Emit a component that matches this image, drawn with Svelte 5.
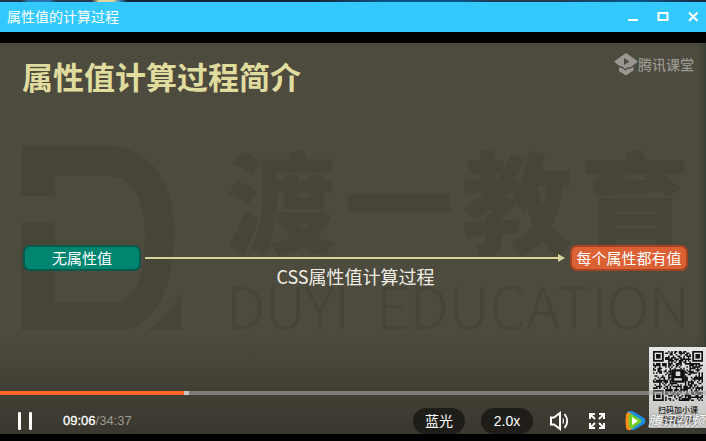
<script>
  const duration = 2077;
  let current = $state(546);
  let playing = $state(true);

  const clock = (s) =>
    `${String(Math.floor(s / 60)).padStart(2, '0')}:${String(s % 60).padStart(2, '0')}`;
  let percent = $derived((current / duration) * 100);

  // QR modules: three finder squares plus a fixed scatter of data cells
  const size = 33;
  const inFinder = (x, y) =>
    (x < 8 && y < 8) || (x > size - 9 && y < 8) || (x < 8 && y > size - 9);
  let seed = 20;
  let cells = '';
  for (let y = 0; y < size; y++) {
    for (let x = 0; x < size; x++) {
      seed = (seed * 1103515245 + 12345) % 2147483648;
      const centre = Math.abs(x - 16) < 5 && Math.abs(y - 16) < 5;
      if (!inFinder(x, y) && !centre && seed / 2147483648 > 0.45) cells += `M${x} ${y}h1v1h-1z`;
    }
  }
  const finders = [[0, 0], [size - 7, 0], [0, size - 7]];
</script>

<div class="window">
  <div class="desktop"></div>
  <header>
    <h1>属性值的计算过程</h1>
    <button aria-label="最小化"><svg width="12" height="12" viewBox="0 0 12 12"><path d="M1 8h10v2H1z" fill="#fff" /></svg></button>
    <button aria-label="最大化"><svg width="12" height="12" viewBox="0 0 12 12"><path d="M1.500 2h9v7h-9z" fill="none" stroke="#fff" stroke-width="2" /></svg></button>
    <button aria-label="关闭"><svg width="12" height="12" viewBox="0 0 12 12"><path d="M2 1.500l8.500 8.500M10.500 1.500L2 10" stroke="#fff" stroke-width="2" /></svg></button>
  </header>

  <main>
    <div class="watermark" aria-hidden="true">
      <svg width="160" height="184" viewBox="0 0 160 184">
        <path d="M0 0H85C130 0 153 36 153 86C153 142 135 184 95 184H0V77H34V157H88C116 157 124 130 124 90C124 52 112 30 86 30H34V50H0z" />
        <path d="M126 184C142 176 153 160 160 146V184z" />
      </svg>
      <div class="school">
        <div class="cn"><span>渡</span><span>一</span><span>教</span><span>育</span></div>
        <div class="en"><span>DUYI</span><span>EDUCATION</span></div>
      </div>
    </div>

    <div class="slide-head">
      <h2>属性值计算过程简介</h2>
      <div class="brand">
        <svg width="24" height="23" viewBox="0 0 24 23">
          <path fill-rule="evenodd" d="M12 0L24 8.500L19.500 12L16 14.500L14 14L11.500 16L8 13.500L5.500 13L0 8.500zM10 5V12L15.500 8.500z" fill="#989791" />
          <path d="M5 14.500L8 15L11.500 17.500L14 15.500L16 16L19.500 13.500V17.500L12 22.500L5 18z" fill="#989791" />
        </svg>
        <span>腾讯课堂</span>
      </div>
    </div>

    <div class="flow">
      <div class="node from">无属性值</div>
      <div class="link">
        <div class="arrow"></div>
        <p>CSS属性值计算过程</p>
      </div>
      <div class="node to">每个属性都有值</div>
    </div>

    <aside class="qr">
      <svg viewBox="0 0 33 33" role="img" aria-label="二维码">
        <path d={cells} fill="#111" />
        {#each finders as [x, y]}
          <rect x={x + 0.5} y={y + 0.5} width="6" height="6" fill="none" stroke="#111" stroke-width="1.2" />
          <rect x={x + 2} y={y + 2} width="3" height="3" fill="#111" />
        {/each}
        <rect x="12" y="12" width="9" height="9" rx="1" fill="#111" />
        <path d="M15 13.500h3v3h-3zM14 18h5v1.500h-5z" fill="#ddd" />
      </svg>
      <span>扫码加小课</span>
      <span>领取资料</span>
    </aside>

    <section class="player">
      <input class="seek" type="range" aria-label="播放进度" min="0" max={duration} bind:value={current} style="--done: {percent}%" />
      <div class="bar">
        <button class="pause" aria-label="暂停" onclick={() => (playing = !playing)}>
          <svg width="16" height="18" viewBox="0 0 16 18" fill="#fff">
            {#if playing}
              <rect x="1" width="3" height="18" rx="1" /><rect x="12" width="3" height="18" rx="1" />
            {:else}
              <path d="M1 0l14 9L1 18z" />
            {/if}
          </svg>
        </button>
        <div class="time"><b>{clock(current)}</b>/{clock(duration)}</div>
        <button class="chip">蓝光</button>
        <button class="chip">2.0x</button>
        <button class="icon" aria-label="音量">
          <svg width="20" height="20" viewBox="0 0 20 20" fill="none" stroke="#fff" stroke-width="2">
            <path d="M2 6.500H5L11 2V18L5 13.500H2z" /><path d="M14 7.500Q15 10 14 12.500" stroke-width="1.200" /><path d="M15.500 3Q21 10 15.500 17" stroke-width="1.800" />
          </svg>
        </button>
        <button class="icon" aria-label="全屏">
          <svg width="18" height="18" viewBox="0 0 18 18" fill="none" stroke="#fff" stroke-width="2">
            <path d="M2 7V2H7M11 2H16V7M16 11V16H11M7 16H2V11M2 2L7 7M16 2L11 7M16 16L11 11M2 16L7 11" />
          </svg>
        </button>
        <a class="tencent" href="#video">
          <svg width="21" height="20" viewBox="0 0 21 20">
            <path d="M2 1Q5-1 9 1L19 7Q22 10 19 13L9 19H5z" fill="#1b8fe6" />
            <path d="M1 4Q2 0 5 2L8 4V17L5 19Q2 20 1 16Q0 10 1 4z" fill="#ff8d1a" />
            <path d="M4 4Q5 2 8 4L15 8Q18 10 15 12L8 17Q5 18 4 16Q3 10 4 4z" fill="#76cc26" />
            <path d="M7 6L13 10L7 14z" fill="#fff" />
          </svg>
          <span>腾讯视频</span>
        </a>
      </div>
    </section>
  </main>
</div>

<style>
  :global(body) { margin: 0; background: #000; }
  .window {
    min-height: 100vh;
    display: flex;
    flex-direction: column;
    overflow: hidden;
    background: #000;
    color: #fff;
    font-family: "Liberation Sans", "Noto Sans CJK SC", sans-serif;
  }
  h1, h2, p { margin: 0; font-weight: 400; }
  button { border: 0; padding: 0; background: none; color: inherit; font: inherit; cursor: pointer; }
  svg { display: block; }
  .desktop {
    height: 2px;
    background: linear-gradient(90deg, #22384c 0 3%, #2676ad 4% 7%, #26384b 8% 13%, #e0d69a 14% 16%, #2f82bc 17%, #17273a 18% 45%, #075488 55% 65%, #26384b 70% 78%, #075488 90%, #14283d);
  }
  header {
    height: 30px;
    padding: 0 7px;
    display: flex;
    align-items: center;
    gap: 18px;
    background: #33c9ff;
  }
  h1 { flex: 1; font-size: 14px; line-height: 20px; }
  main {
    position: relative;
    flex: 1;
    margin: 11px 0 7px;
    display: flex;
    flex-direction: column;
    background: linear-gradient(#4d4a3e 0 74%, #3a372e);
    box-shadow: inset -8px 0 8px -8px #24352f;
    overflow: hidden;
  }
  .watermark {
    position: absolute;
    top: 103px;
    left: 21px;
    right: 16px;
    display: flex;
    justify-content: space-between;
    color: #474438;
    fill: #474438;
    font-family: "Noto Sans CJK SC", sans-serif;
  }
  .school { width: 464px; }
  .cn { display: flex; justify-content: space-between; font-size: 110px; line-height: 104px; font-weight: 900; }
  .en { display: flex; justify-content: space-between; padding-top: 12px; font-size: 58px; line-height: 84px; font-weight: 300; }
  .slide-head {
    position: relative;
    padding: 10px 12px 0 22px;
    display: flex;
    justify-content: space-between;
    align-items: flex-start;
  }
  h2 { font-size: 31px; line-height: 52px; font-weight: 700; color: #e0dc9e; }
  .brand { display: flex; align-items: center; font-size: 14px; line-height: 22px; font-weight: 500; color: #989791; }
  .flow {
    position: relative;
    flex: 1;
    padding: 140px 18px 0 23px;
    display: flex;
    align-items: flex-start;
    gap: 4px;
  }
  .node {
    box-sizing: border-box;
    width: 118px;
    height: 26px;
    border: 2px solid;
    border-radius: 7px;
    font-size: 15px;
    line-height: 24px;
    text-align: center;
    white-space: nowrap;
  }
  .from { background: #008571; border-color: #075b4c; }
  .to { background: #db6033; border-color: #a44423; }
  .link { flex: 1; font-size: 18px; line-height: 22px; text-align: center; color: #f0eee4; font-family: "Noto Sans CJK SC", sans-serif; }
  .arrow { height: 2px; margin: 12px 7px 6px 0; background: #d9d49c; position: relative; }
  .arrow::after {
    content: "";
    position: absolute;
    right: -6px;
    top: -3px;
    border: 4px solid transparent;
    border-left: 7px solid #d9d49c;
    border-right: 0;
  }
  .qr {
    position: absolute;
    right: 0;
    bottom: 6px;
    width: 50px;
    height: 77px;
    padding: 4px 3px 0 4px;
    background: linear-gradient(#e6e6e6, #c4c4c2);
    color: #222;
    font-size: 8px;
    line-height: 10px;
    font-weight: 500;
    text-align: center;
  }
  .qr svg { width: 50px; height: 50px; margin-bottom: 5px; }
  .qr span { display: block; white-space: nowrap; }
  .player { position: relative; }
  .seek {
    display: block;
    width: 100%;
    height: 4px;
    margin: 0 0 13px;
    appearance: none;
    background: linear-gradient(90deg, #ff6428 var(--done), rgba(168, 168, 166, 0.6) var(--done));
  }
  .seek::-webkit-slider-thumb { appearance: none; width: 5px; height: 4px; background: #c8c8c2; }
  .bar { display: flex; align-items: center; height: 26px; padding-left: 17px; }
  .time { flex: 1; margin-left: 30px; font-size: 13px; line-height: 18px; color: #9b9992; }
  .time b { color: #fff; font-weight: 400; -webkit-text-stroke: 0.300px #fff; }
  .chip { width: 52px; height: 26px; margin-right: 16px; border-radius: 13px; background: #1e1d18; font-size: 14px; line-height: 26px; }
  .icon { margin-right: 19px; }
  .tencent {
    width: 81px;
    display: flex;
    align-items: center;
    gap: 2px;
    color: #fff;
    text-decoration: none;
    font-size: 14px;
    line-height: 20px;
    font-style: italic;
    white-space: nowrap;
  }
  .tencent svg { flex: none; }
  .tencent span { opacity: 0.9; text-shadow: 0 0 2px #555; }
</style>
